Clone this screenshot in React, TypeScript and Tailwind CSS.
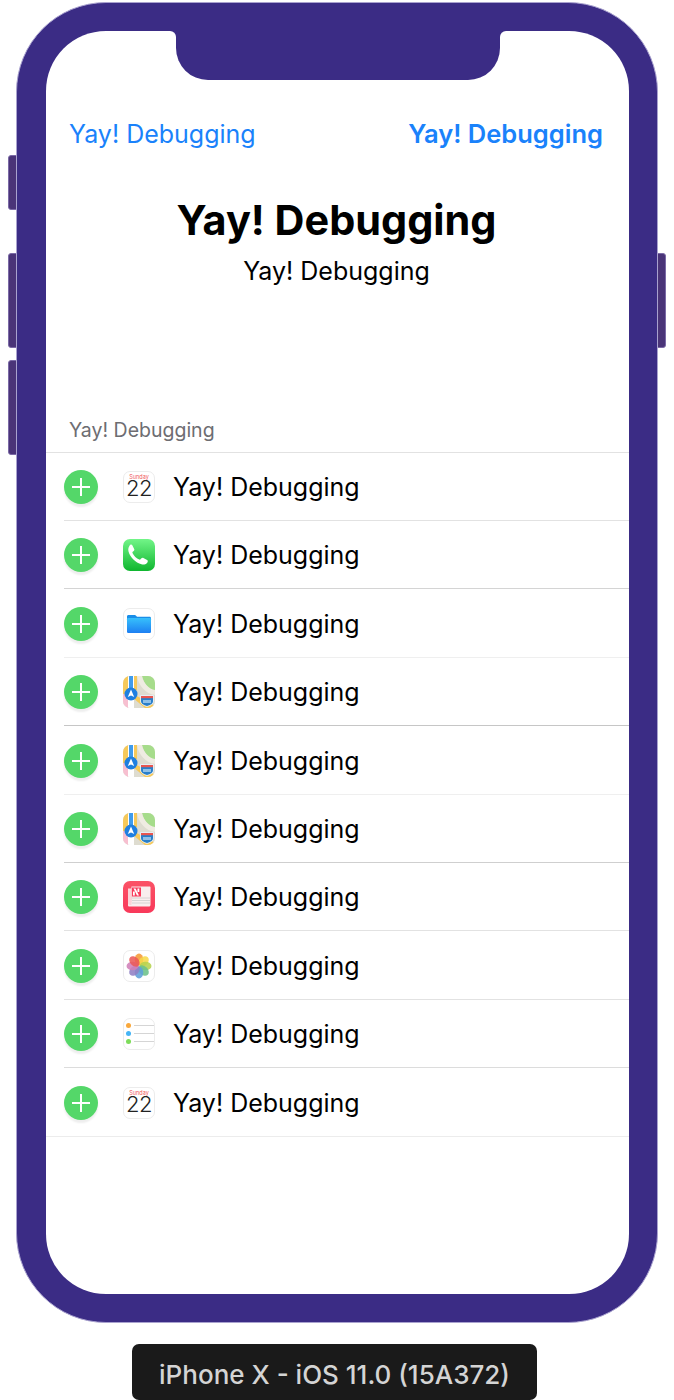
import React from "react";

const font = { fontFamily: "Inter, 'Liberation Sans', sans-serif" };

function Shell({ children, white }: { children: React.ReactNode; white?: boolean }) {
  return (
    <div className={`w-8 h-8 rounded-[7px] overflow-hidden shrink-0 ${white ? "border border-[#ececec] bg-white" : ""}`}>
      {children}
    </div>
  );
}

function Calendar() {
  return (
    <Shell white>
      <div className="flex flex-col items-center">
        <span className="text-[5.5px] leading-[5px] mt-[3px] text-[#f0555a]">Sunday</span>
        <span className="text-[22px] leading-[17px] font-light text-[#222] tracking-[-0.5px]">22</span>
      </div>
    </Shell>
  );
}

function Phone() {
  return (
    <Shell>
      <svg viewBox="0 0 32 32" className="w-full h-full">
        <defs>
          <linearGradient id="ph" x1="0" y1="0" x2="0" y2="1">
            <stop offset="0" stopColor="#72f588" />
            <stop offset="1" stopColor="#0fb62f" />
          </linearGradient>
        </defs>
        <rect width="32" height="32" fill="url(#ph)" />
        <path d="M6.300 6.200c1.100-.9 2.400-1.200 3 0l1.900 3.700c.4.8.1 1.500-.5 2l-1 .8c-.4.3-.4.7-.2 1.200.7 1.500 1.600 2.800 2.800 4 1.200 1.200 2.600 2.100 4 2.700.5.2.9.1 1.200-.3l.9-1c.6-.6 1.300-.8 2-.4l3.700 2c1.100.6.800 1.900-.1 3-1.300 1.500-3.500 2-5.500 1.400-3-.9-5.900-2.700-8.100-4.900-2.200-2.200-4.100-5-4.900-8-.6-2.100 0-4.700 1.500-6.200z" fill="#fff" />
      </svg>
    </Shell>
  );
}

function Files() {
  return (
    <Shell white>
      <svg viewBox="0 0 30 30" className="w-full h-full">
        <defs>
          <linearGradient id="fo" x1="0" y1="0" x2="0" y2="1">
            <stop offset="0" stopColor="#37c0fb" />
            <stop offset="1" stopColor="#1d7ff2" />
          </linearGradient>
        </defs>
        <path d="M3 7.500c0-.8.6-1.500 1.400-1.500h6.300c.6 0 1 .2 1.400.7l.9 1.100h12.600c.8 0 1.400.6 1.400 1.400V11H3z" fill="#1a8ee8" />
        <rect x="3" y="9" width="24" height="15" rx="1.300" fill="url(#fo)" />
      </svg>
    </Shell>
  );
}

function Maps() {
  return (
    <Shell>
      <svg viewBox="0 0 32 32" className="w-full h-full">
        <rect width="32" height="32" fill="#dedcd0" />
        <path d="M19 0h13v16C27 15 21 8 19 0z" fill="#a6dc8b" />
        <path d="M14 0h5c1 7 7 13 13 14v5C23 18 15 9 14 0z" fill="#efece2" />
        <path d="M0 0h6v16L0 20z" fill="#f6c95a" />
        <path d="M0 18h6v14H4c-2 0-4-2-4-4z" fill="#f7bfd0" />
        <path d="M11 0h3v14l-3 2z" fill="#f6c95a" />
        <path d="M12 19l20 11v2H22L10 22z" fill="#f6c95a" />
        <rect x="5" y="0" width="6" height="32" fill="#fff" />
        <rect x="6" y="0" width="4" height="14" fill="#3f9bec" />
        <circle cx="8" cy="18" r="6.500" fill="#1f7fe0" />
        <path d="M8 13.500l3.200 7.500-3.200-1.600-3.200 1.600z" fill="#fff" />
        <path d="M17.500 19.500h13v5.500c0 3-3.500 4.500-6.500 5.500-3-1-6.500-2.500-6.500-5.500z" fill="#2a7fc9" stroke="#fff" strokeWidth="0.800" />
        <rect x="18" y="20" width="12" height="2.200" fill="#e9564f" />
        <rect x="20" y="24" width="8" height="3" fill="#8fc0e8" />
      </svg>
    </Shell>
  );
}

function News() {
  return (
    <Shell>
      <svg viewBox="0 0 32 32" className="w-full h-full">
        <defs>
          <linearGradient id="nw" x1="0" y1="0" x2="0" y2="1">
            <stop offset="0" stopColor="#fb5266" />
            <stop offset="1" stopColor="#f8395a" />
          </linearGradient>
        </defs>
        <rect width="32" height="32" fill="url(#nw)" />
        <path d="M5 7.500V24c0 1 .5 1.500 1.500 1.500H26c.8 0 1.500-.6 1.500-1.500V6.500c0-.6-.4-1-1-1H8.500v.5L8 23.500" fill="#f9eeee" />
        <path d="M5 7.500h3.500v16.500c-2 0-3.500-.2-3.500-1.500z" fill="#fbd3d8" />
        <rect x="9" y="6.500" width="9" height="9" fill="#f8395a" />
        <path d="M10.500 7.500h2l3.500 7h-2z" fill="#fff" />
        <rect x="10" y="10.500" width="1.800" height="4" fill="#fff" />
        <rect x="14.500" y="7.500" width="1.800" height="3.500" fill="#fff" />
        <path d="M9 17h18M9 19.500h18M9 22h18" stroke="#d3cfcf" strokeWidth="0.900" />
      </svg>
    </Shell>
  );
}

function Photos() {
  const petals = ["#f59a36", "#f7d84a", "#b5d34e", "#6cc18a", "#5f9fd8", "#8f7fc4", "#d07fb8", "#ea5a58"];
  return (
    <Shell white>
      <svg viewBox="0 0 30 30" className="w-full h-full">
        {petals.map((c, i) => (
          <ellipse key={i} cx="15" cy="8.500" rx="4.300" ry="6" fill={c} fillOpacity="0.88" transform={`rotate(${i * 45} 15 15)`} />
        ))}
      </svg>
    </Shell>
  );
}

function Reminders() {
  return (
    <Shell white>
      <svg viewBox="0 0 30 30" className="w-full h-full">
        <path d="M10 6.500h20M10 14.500h20M10 22.500h20" stroke="#d0d0d0" strokeWidth="0.900" />
        <circle cx="4.500" cy="6.500" r="2.500" fill="#f9a83c" />
        <circle cx="4.500" cy="14.500" r="2.500" fill="#45b4f5" />
        <circle cx="4.500" cy="22.500" r="2.500" fill="#7ddc5a" />
      </svg>
    </Shell>
  );
}

const rows = [
  { Icon: Calendar, line: "border-[#e2e2e2]" },
  { Icon: Phone, line: "border-[#d4d4d4]" },
  { Icon: Files, line: "border-[#efefef]" },
  { Icon: Maps, line: "border-[#c6c6c6]" },
  { Icon: Maps, line: "border-[#efefef]" },
  { Icon: Maps, line: "border-[#cfcfcf]" },
  { Icon: News, line: "border-[#e2e2e2]" },
  { Icon: Photos, line: "border-[#e2e2e2]" },
  { Icon: Reminders, line: "border-[#dcdcdc]" },
  { Icon: Calendar, line: "border-[#ececec]" },
];

function Row({ Icon, line, last }: { Icon: () => React.ReactElement; line: string; last: boolean }) {
  return (
    <div className={`h-[68.4px] pt-[1.5px] flex items-center border-b ${line} ${last ? "pl-[18px]" : "ml-[18px]"}`}>
      <div className="relative w-[34px] h-[34px] rounded-full bg-[#54d769] shadow-[0_3px_2px_rgba(0,0,0,0.07)] shrink-0 flex items-center justify-center">
        <div className="absolute w-[18px] h-[2px] bg-white" />
        <div className="absolute w-[2px] h-[18px] bg-white" />
      </div>
      <div className="ml-[25px]">
        <Icon />
      </div>
      <span className="ml-[18px] text-[25px] leading-[34px] text-black">Yay! Debugging</span>
    </div>
  );
}

function SideButton({ className }: { className: string }) {
  return <div className={`absolute w-[9px] bg-[#4a3478] border border-[#7b6aa6] ${className}`} />;
}

export default function App() {
  return (
    <div className="relative w-[674px] h-[1400px] bg-white overflow-hidden" style={font}>
      <SideButton className="left-[8px] top-[155px] h-[55px] rounded-l-[3px]" />
      <SideButton className="left-[8px] top-[253px] h-[95px] rounded-l-[3px]" />
      <SideButton className="left-[8px] top-[360px] h-[95px] rounded-l-[3px]" />
      <SideButton className="left-[657px] top-[253px] h-[95px] rounded-r-[3px]" />

      <div className="relative ml-[16px] mt-[2px] w-[642px] h-[1321px] rounded-[90px] bg-[#3b2c85] border border-[#a9a2cf] pt-[28px] pl-[29px]">
        <div className="relative w-[583px] h-[1263px] rounded-[60px] bg-white overflow-hidden">
          <div className="absolute left-[130px] top-0 w-[324px] h-[49px] bg-[#3b2c85] rounded-b-[32px]" />
          <div className="absolute left-[124px] top-0 w-[6px] h-[6px] bg-[#3b2c85]">
            <div className="w-full h-full bg-white rounded-tr-[6px]" />
          </div>
          <div className="absolute left-[454px] top-0 w-[6px] h-[6px] bg-[#3b2c85]">
            <div className="w-full h-full bg-white rounded-tl-[6px]" />
          </div>

          <div className="flex justify-between pl-[23px] pr-[26px] pt-[86px] text-[25px] leading-[34px] text-[#1a82fb]">
            <span>Yay! Debugging</span>
            <span className="font-semibold text-[25.5px]">Yay! Debugging</span>
          </div>

          <div className="flex flex-col items-center mt-[44px] pr-[2px]">
            <span className="text-[41.4px] leading-[50px] font-bold text-black">Yay! Debugging</span>
            <span className="text-[25px] leading-[34px] text-black mt-[9px]">Yay! Debugging</span>
          </div>

          <div className="mt-[129px] pl-[23px] text-[19.5px] leading-[26px] text-[#6d6d72]">Yay! Debugging</div>

          <div className="mt-[8.6px] border-t border-[#e2e2e2]">
            {rows.map((r, i) => (
              <Row key={i} Icon={r.Icon} line={r.line} last={i === rows.length - 1} />
            ))}
          </div>
        </div>
      </div>

      <div className="w-[405px] h-[56px] ml-[132px] mt-[21px] pt-[4px] rounded-[7px] bg-[#1a1a1a] flex items-center justify-center text-[26px] text-[#d4d4d4] font-medium">
        iPhone X - iOS 11.0 (15A372)
      </div>
    </div>
  );
}
